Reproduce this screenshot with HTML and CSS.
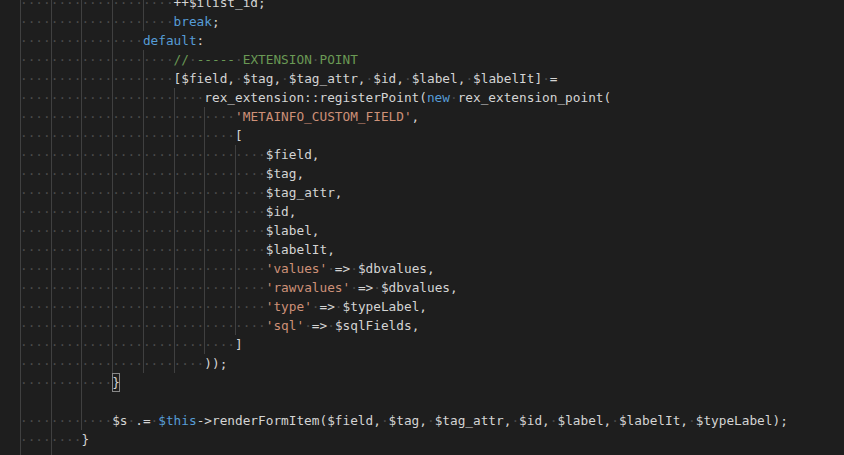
FILE: index.html
```html
<!DOCTYPE html>
<html>
<head>
<meta charset="utf-8">
<link rel="stylesheet" href="styles.css">
</head>
<body>
<div class="editor">
<div class="code">
<div class="ln"><span class="ind">····</span><span class="ind">····</span><span class="ind">····</span><span class="ind">····</span><span class="ind">····</span>++$ilist_id;</div>
<div class="ln"><span class="ind">····</span><span class="ind">····</span><span class="ind">····</span><span class="ind">····</span><span class="ind">····</span><span class="k">break</span>;</div>
<div class="ln"><span class="ind">····</span><span class="ind">····</span><span class="ind">····</span><span class="ind">····</span><span class="k">default</span>:</div>
<div class="ln"><span class="ind">····</span><span class="ind">····</span><span class="ind">····</span><span class="ind">····</span><span class="ind">····</span><span class="c">//<span class="w">·</span>-----<span class="w">·</span>EXTENSION<span class="w">·</span>POINT</span></div>
<div class="ln"><span class="ind">····</span><span class="ind">····</span><span class="ind">····</span><span class="ind">····</span><span class="ind">····</span>[$field,<span class="w">·</span>$tag,<span class="w">·</span>$tag_attr,<span class="w">·</span>$id,<span class="w">·</span>$label,<span class="w">·</span>$labelIt]<span class="w">·</span>=</div>
<div class="ln"><span class="ind">····</span><span class="ind">····</span><span class="ind">····</span><span class="ind">····</span><span class="ind">····</span><span class="ind">····</span>rex_extension::registerPoint(<span class="k">new</span><span class="w">·</span>rex_extension_point(</div>
<div class="ln"><span class="ind">····</span><span class="ind">····</span><span class="ind">····</span><span class="ind">····</span><span class="ind">····</span><span class="ind">····</span><span class="ind">····</span><span class="s">'METAINFO_CUSTOM_FIELD'</span>,</div>
<div class="ln"><span class="ind">····</span><span class="ind">····</span><span class="ind">····</span><span class="ind">····</span><span class="ind">····</span><span class="ind">····</span><span class="ind">····</span>[</div>
<div class="ln"><span class="ind">····</span><span class="ind">····</span><span class="ind">····</span><span class="ind">····</span><span class="ind">····</span><span class="ind">····</span><span class="ind">····</span><span class="ind">····</span>$field,</div>
<div class="ln"><span class="ind">····</span><span class="ind">····</span><span class="ind">····</span><span class="ind">····</span><span class="ind">····</span><span class="ind">····</span><span class="ind">····</span><span class="ind">····</span>$tag,</div>
<div class="ln"><span class="ind">····</span><span class="ind">····</span><span class="ind">····</span><span class="ind">····</span><span class="ind">····</span><span class="ind">····</span><span class="ind">····</span><span class="ind">····</span>$tag_attr,</div>
<div class="ln"><span class="ind">····</span><span class="ind">····</span><span class="ind">····</span><span class="ind">····</span><span class="ind">····</span><span class="ind">····</span><span class="ind">····</span><span class="ind">····</span>$id,</div>
<div class="ln"><span class="ind">····</span><span class="ind">····</span><span class="ind">····</span><span class="ind">····</span><span class="ind">····</span><span class="ind">····</span><span class="ind">····</span><span class="ind">····</span>$label,</div>
<div class="ln"><span class="ind">····</span><span class="ind">····</span><span class="ind">····</span><span class="ind">····</span><span class="ind">····</span><span class="ind">····</span><span class="ind">····</span><span class="ind">····</span>$labelIt,</div>
<div class="ln"><span class="ind">····</span><span class="ind">····</span><span class="ind">····</span><span class="ind">····</span><span class="ind">····</span><span class="ind">····</span><span class="ind">····</span><span class="ind">····</span><span class="s">'values'</span><span class="w">·</span>=&gt;<span class="w">·</span>$dbvalues,</div>
<div class="ln"><span class="ind">····</span><span class="ind">····</span><span class="ind">····</span><span class="ind">····</span><span class="ind">····</span><span class="ind">····</span><span class="ind">····</span><span class="ind">····</span><span class="s">'rawvalues'</span><span class="w">·</span>=&gt;<span class="w">·</span>$dbvalues,</div>
<div class="ln"><span class="ind">····</span><span class="ind">····</span><span class="ind">····</span><span class="ind">····</span><span class="ind">····</span><span class="ind">····</span><span class="ind">····</span><span class="ind">····</span><span class="s">'type'</span><span class="w">·</span>=&gt;<span class="w">·</span>$typeLabel,</div>
<div class="ln"><span class="ind">····</span><span class="ind">····</span><span class="ind">····</span><span class="ind">····</span><span class="ind">····</span><span class="ind">····</span><span class="ind">····</span><span class="ind">····</span><span class="s">'sql'</span><span class="w">·</span>=&gt;<span class="w">·</span>$sqlFields,</div>
<div class="ln"><span class="ind">····</span><span class="ind">····</span><span class="ind">····</span><span class="ind">····</span><span class="ind">····</span><span class="ind">····</span><span class="ind">····</span>]</div>
<div class="ln"><span class="ind">····</span><span class="ind">····</span><span class="ind">····</span><span class="ind">····</span><span class="ind">····</span><span class="ind">····</span>));</div>
<div class="ln"><span class="ind">····</span><span class="ind">····</span><span class="ind">····</span><span class="br">}</span></div>
<div class="ln"><span class="ind">    </span><span class="ind">    </span><span class="ind">    </span></div>
<div class="ln"><span class="ind">····</span><span class="ind">····</span><span class="ind">····</span>$s<span class="w">·</span>.=<span class="w">·</span><span class="k">$this</span>-&gt;renderFormItem($field,<span class="w">·</span>$tag,<span class="w">·</span>$tag_attr,<span class="w">·</span>$id,<span class="w">·</span>$label,<span class="w">·</span>$labelIt,<span class="w">·</span>$typeLabel);</div>
<div class="ln"><span class="ind">····</span><span class="ind">····</span>}</div>
<div class="ln"><span class="ind">    </span><span class="ind">    </span></div>
</div>
</div>
</body>
</html>
```
FILE: styles.css
```css
html, body {
  margin: 0;
  padding: 0;
  background: #1e1e1e;
}
body {
  width: 844px;
  height: 455px;
  overflow: hidden;
}
.editor {
  width: 844px;
  height: 455px;
  overflow: hidden;
  background: #1e1e1e;
}
.code {
  margin-top: -7px;
  padding-left: 20px;
  font-family: "DejaVu Sans Mono", "Liberation Mono", monospace;
  font-size: 12.76px;
  line-height: 19px;
  color: #d4d4d4;
}
.ln {
  height: 19px;
  white-space: pre;
}
.ind {
  display: inline-block;
  vertical-align: top;
  height: 19px;
  color: #4a4a4a;
  box-shadow: inset 1px 0 0 #404040;
}
.w {
  color: #4a4a4a;
}
.k {
  color: #569cd6;
}
.s {
  color: #ce9178;
}
.c {
  color: #6a9955;
}
.c .w {
  color: #4a4a4a;
}
.br {
  display: inline-block;
  vertical-align: top;
  height: 19px;
  box-shadow: inset 0 0 0 1px #888888;
}
```
